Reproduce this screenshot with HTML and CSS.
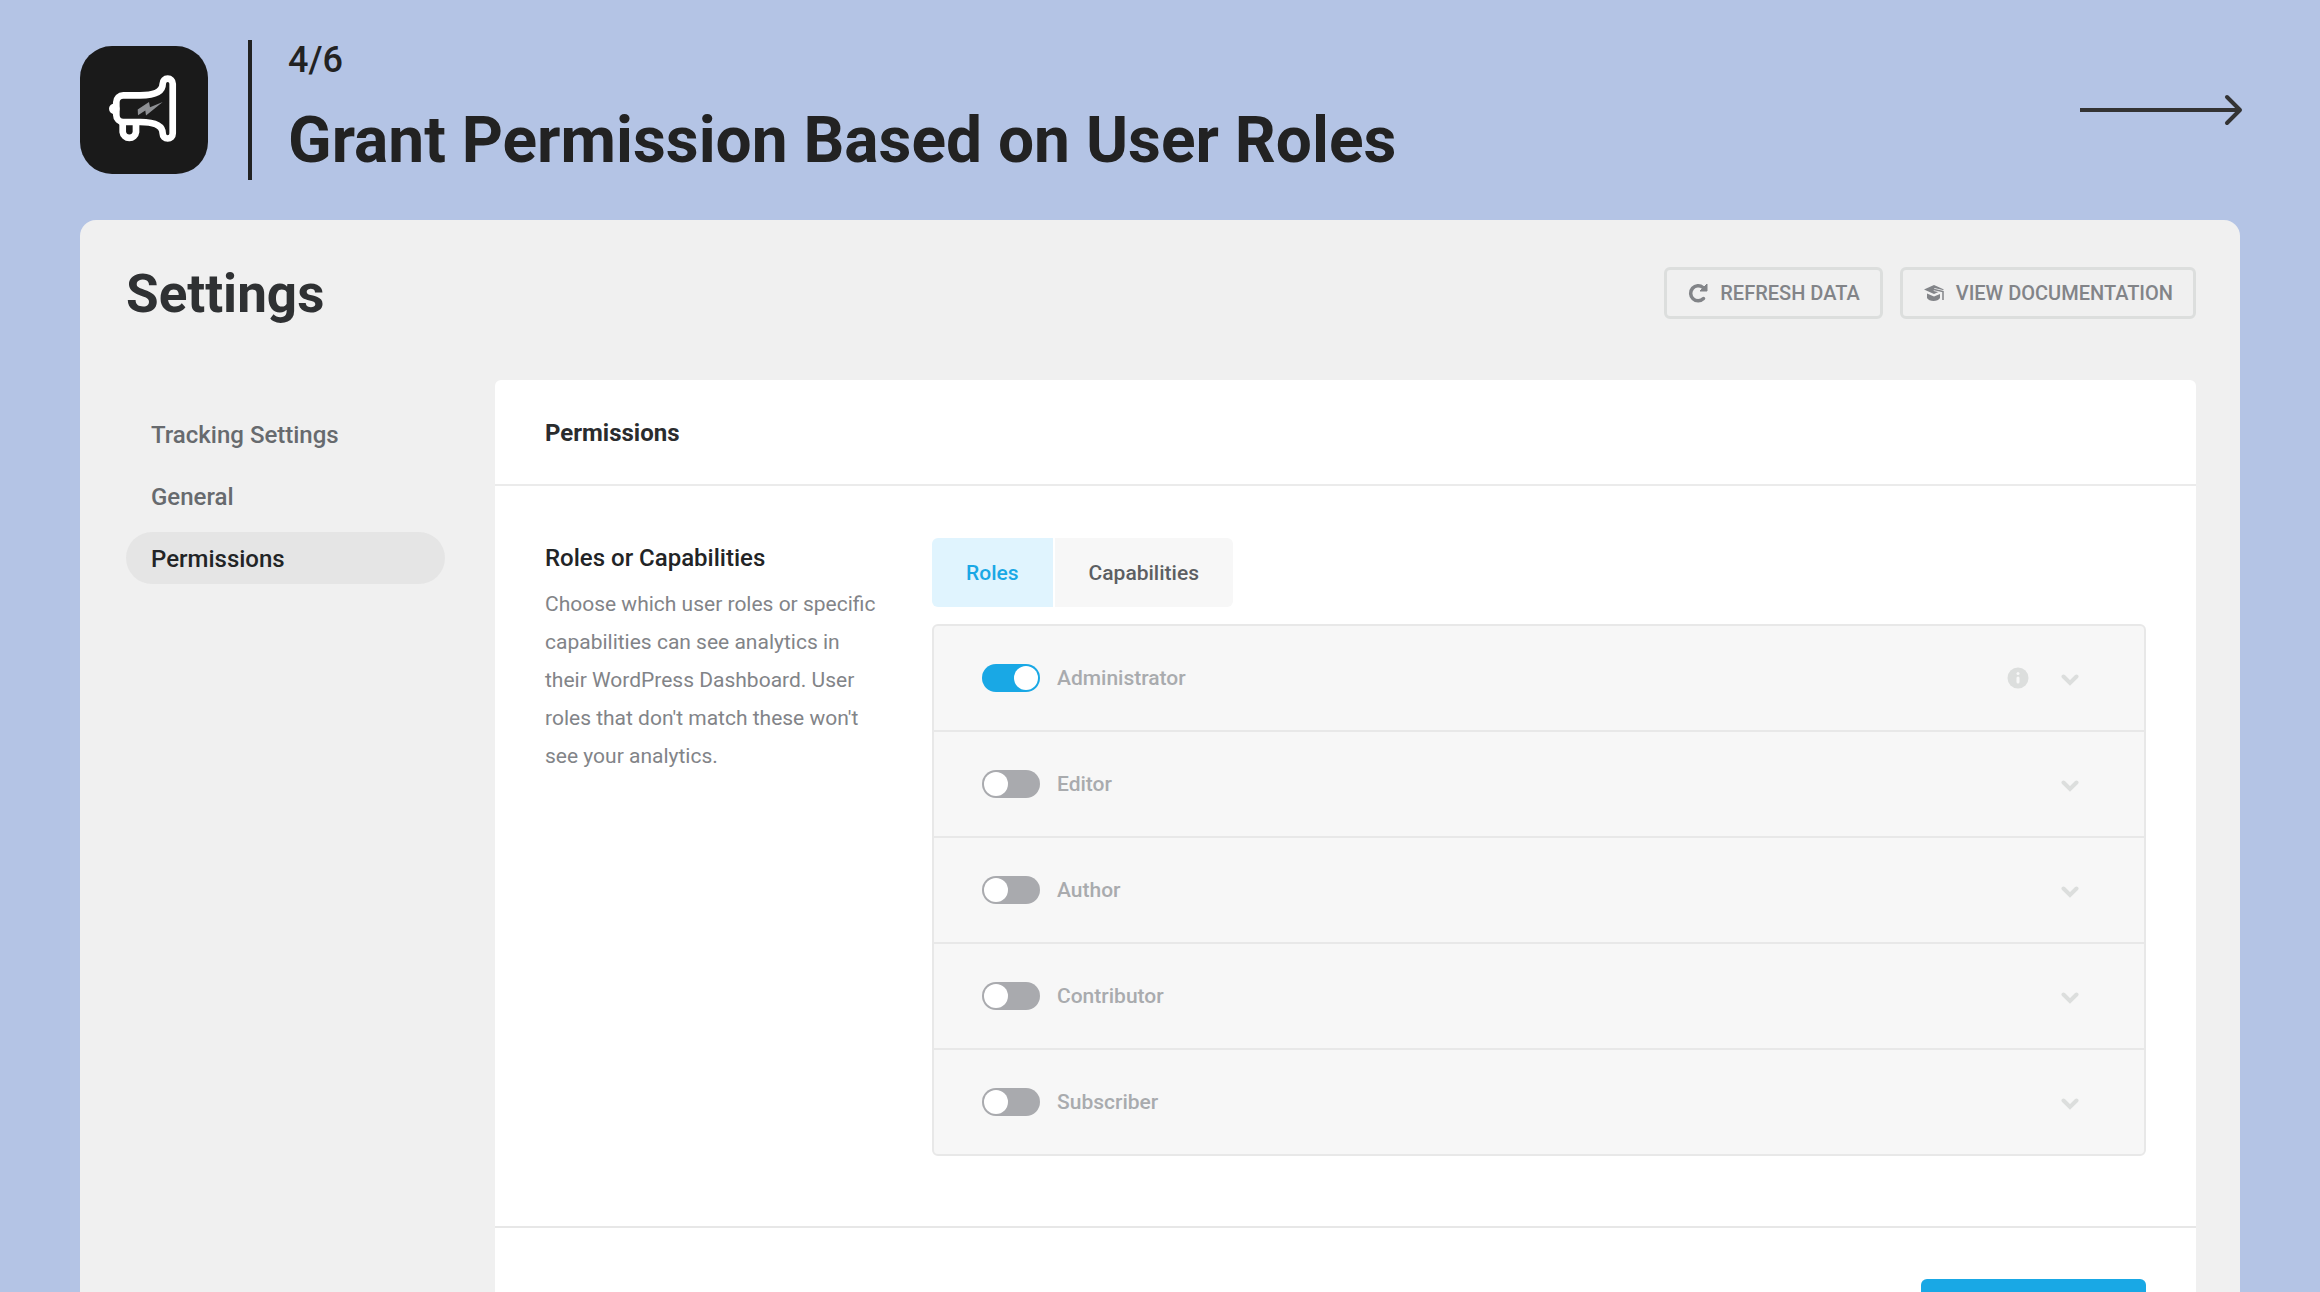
FILE: index.html
```html
<!DOCTYPE html>
<html lang="en">
<head>
  <meta charset="UTF-8" />
  <meta name="viewport" content="width=device-width, initial-scale=1.0" />
  <title>Grant Permission Based on User Roles</title>
  <link rel="stylesheet" href="styles.css">
</head>
<body>

  <div class="page">

    <!-- Slide heading -->
    <header class="slide-header">
      <svg class="logo" viewBox="0 0 128 128" aria-hidden="true">
        <rect width="128" height="128" rx="32" fill="#1a1a1a" />
        <g fill="none" stroke="#fff" stroke-width="6.7">
          <path d="M43.3 49.3H60C74 49.3 82.7 46 82.7 37.7a5 5 0 0 1 10 0V87.5a5 5 0 0 1-10 0C82.7 79 74 76 60 76H43.3a7 7 0 0 1-7-7V56.3a7 7 0 0 1 7-7z" />
          <path d="M42.7 77V86a6.7 6.7 0 0 0 13.3 0V77" />
        </g>
        <circle cx="34.3" cy="62.7" r="5.3" fill="#fff" />
        <path d="M57.7 63.5L69 56l1 5.3L82.7 56 66 69.5l-.7-5-7.3 4.8z" fill="#8e9094" />
      </svg>
      <div class="divider"></div>
      <div class="slide-text">
        <p class="step">4/6</p>
        <h1 class="slide-title">Grant Permission Based on User Roles</h1>
      </div>
      <svg class="arrow" viewBox="0 0 164 32" aria-hidden="true">
        <path d="M0 16H158" stroke="#333" stroke-width="4" />
        <path d="M147 3L160 16L147 29" fill="none" stroke="#333" stroke-width="4" stroke-linecap="round" stroke-linejoin="round" />
      </svg>
    </header>

    <!-- Settings screen -->
    <div class="window">
      <div class="toolbar">
        <h2 class="toolbar-title">Settings</h2>
        <div class="toolbar-actions">
          <button type="button" class="btn-outline">
            <svg width="20" height="22" viewBox="0 0 20 22" aria-hidden="true">
              <path d="M15.5 16.5A7.5 7.5 0 1 1 15 5.500" fill="none" stroke="currentColor" stroke-width="3.5" stroke-linecap="round" />
              <path d="M19 2V9H12z" fill="currentColor" stroke="currentColor" stroke-linejoin="round" />
            </svg>
            REFRESH DATA
          </button>
          <button type="button" class="btn-outline">
            <svg width="20" height="18" viewBox="0 0 20 18" aria-hidden="true">
              <path d="M10 1L20 5.5 10 10 0 5.500z" fill="currentColor" />
              <path d="M3 9.500l7 3L16 10v4c-2 4-11 4-13 0z" fill="currentColor" />
              <path d="M10 5.500l8.800 2V16" fill="none" stroke="#f0f0f0" stroke-width="3" />
              <path d="M10 5.500l9 2V16" fill="none" stroke="currentColor" stroke-width="1.5" />
            </svg>
            VIEW DOCUMENTATION
          </button>
        </div>
      </div>

      <div class="layout">
        <nav class="sidebar">
          <a href="#tracking">Tracking Settings</a>
          <a href="#general">General</a>
          <a href="#permissions" class="active">Permissions</a>
        </nav>

        <main class="card">
          <h3 class="card-header">Permissions</h3>

          <div class="card-body">
            <div class="info">
              <h4 class="info-title">Roles or Capabilities</h4>
              <p class="info-text">Choose which user roles or specific capabilities can see analytics in their WordPress Dashboard. User roles that don't match these won't see your analytics.</p>
            </div>

            <div class="options">
              <div class="tabs">
                <button type="button" class="tab active">Roles</button>
                <button type="button" class="tab">Capabilities</button>
              </div>

              <ul class="roles">
                <li class="role">
                  <input type="checkbox" class="toggle" id="administrator" checked />
                  <label for="administrator">Administrator</label>
                  <svg class="info-icon" viewBox="0 0 22 22" aria-hidden="true">
                    <circle cx="11" cy="11" r="10.5" fill="#dcdedd" />
                    <circle cx="11" cy="6.5" r="1.5" fill="#f7f7f7" />
                    <rect x="9.5" y="9.5" width="3" height="7" rx="1.5" fill="#f7f7f7" />
                  </svg>
                  <button type="button" class="expand" aria-label="Expand Administrator">
                    <svg viewBox="0 0 18 12" aria-hidden="true"><path d="M2.5 2.5L9 9l6.500-6.500" /></svg>
                  </button>
                </li>
                <li class="role">
                  <input type="checkbox" class="toggle" id="editor" />
                  <label for="editor">Editor</label>
                  <button type="button" class="expand" aria-label="Expand Editor">
                    <svg viewBox="0 0 18 12" aria-hidden="true"><path d="M2.5 2.5L9 9l6.500-6.500" /></svg>
                  </button>
                </li>
                <li class="role">
                  <input type="checkbox" class="toggle" id="author" />
                  <label for="author">Author</label>
                  <button type="button" class="expand" aria-label="Expand Author">
                    <svg viewBox="0 0 18 12" aria-hidden="true"><path d="M2.5 2.5L9 9l6.500-6.500" /></svg>
                  </button>
                </li>
                <li class="role">
                  <input type="checkbox" class="toggle" id="contributor" />
                  <label for="contributor">Contributor</label>
                  <button type="button" class="expand" aria-label="Expand Contributor">
                    <svg viewBox="0 0 18 12" aria-hidden="true"><path d="M2.5 2.5L9 9l6.500-6.500" /></svg>
                  </button>
                </li>
                <li class="role">
                  <input type="checkbox" class="toggle" id="subscriber" />
                  <label for="subscriber">Subscriber</label>
                  <button type="button" class="expand" aria-label="Expand Subscriber">
                    <svg viewBox="0 0 18 12" aria-hidden="true"><path d="M2.5 2.5L9 9l6.500-6.500" /></svg>
                  </button>
                </li>
              </ul>
            </div>
          </div>

          <div class="card-footer">
            <button type="button" class="btn-save" aria-label="Save"></button>
          </div>
        </main>
      </div>
    </div>

  </div>

</body>
</html>
```
FILE: styles.css
```css
* {
  box-sizing: border-box;
}

body {
  margin: 0;
  font-family: Roboto, "Liberation Sans", sans-serif;
  background-color: #b4c4e5;
  color: #222;
}

h1, h2, h3, h4, p, ul {
  margin: 0;
  padding: 0;
}

button {
  font-family: inherit;
  border: none;
  cursor: pointer;
}

.page {
  display: flex;
  flex-direction: column;
  height: 100vh;
  padding: 40px 80px 0;
  overflow: hidden;
}

/* Slide heading */
.slide-header {
  display: flex;
  align-items: center;
  margin-bottom: 40px;
}

.logo {
  width: 128px;
  height: 128px;
}

.divider {
  align-self: stretch;
  width: 4px;
  margin: 0 36px 0 40px;
  background: #222;
}

.step {
  margin-bottom: 22px;
  font-size: 36px;
  font-weight: 500;
  line-height: 40px;
}

.slide-title {
  font-size: 64px;
  font-weight: 700;
  line-height: 78px;
}

.arrow {
  width: 164px;
  height: 32px;
  margin: 0 -4px 0 auto;
}

/* Settings screen */
.window {
  flex: 1 0 auto;
  padding: 46px 44px 44px 46px;
  background: #f0f0f0;
  border-radius: 16px 16px 0 0;
}

.toolbar {
  display: flex;
  align-items: center;
  justify-content: space-between;
  margin-bottom: 60px;
}

.toolbar-title {
  padding-top: 2px;
  font-size: 53px;
  font-weight: 700;
  line-height: 52px;
  color: #2f3133;
}

.toolbar-actions {
  display: flex;
  gap: 17px;
}

.btn-outline {
  display: flex;
  align-items: center;
  gap: 12px;
  height: 52px;
  padding: 0 20px 0 21px;
  font-size: 20px;
  font-weight: 500;
  color: #828488;
  background: none;
  border: 3px solid #dcdedd;
  border-radius: 6px;
}

.layout {
  display: flex;
  gap: 50px;
}

.sidebar {
  display: flex;
  flex: 0 0 319px;
  flex-direction: column;
  gap: 10px;
  padding-top: 28px;
}

.sidebar a {
  padding: 2px 25px 0;
  font-size: 24px;
  font-weight: 500;
  line-height: 50px;
  color: #676a6e;
  text-decoration: none;
  border-radius: 26px;
}

.sidebar .active {
  color: #222426;
  background: #e5e5e5;
}

.card {
  flex: 1;
  background: #fff;
  border-radius: 6px;
}

.card-header {
  padding: 2px 50px 0;
  font-size: 24px;
  font-weight: 700;
  line-height: 102px;
  color: #2a2c2e;
  border-bottom: 2px solid #ebebeb;
}

.card-body {
  display: grid;
  grid-template-columns: 337px 1fr;
  gap: 50px;
  padding: 52px 50px 70px;
  border-bottom: 2px solid #e7e7e7;
}

.info {
  padding-top: 1px;
}

.info-title {
  margin-bottom: 8px;
  font-size: 24px;
  font-weight: 500;
  line-height: 38px;
  color: #222426;
}

.info-text {
  font-size: 21px;
  line-height: 38px;
  color: #828488;
}

.tabs {
  display: flex;
  gap: 2px;
  margin-bottom: 17px;
}

.tab {
  height: 69px;
  padding: 0 34px;
  font-size: 21px;
  font-weight: 500;
  color: #5c5f63;
  background: #f7f7f7;
  border-radius: 0 6px 6px 0;
}

.tab.active {
  color: #19a8e5;
  background: #e0f4fe;
  border-radius: 6px 0 0 6px;
}

.roles {
  list-style: none;
  background: #f7f7f7;
  border: 2px solid #e8e8e8;
  border-radius: 6px;
}

.role {
  display: flex;
  align-items: center;
  height: 106px;
  padding: 0 48px;
  border-bottom: 2px solid #e8e8e8;
}

.role:last-child {
  height: 104px;
  border-bottom: none;
}

.role label {
  flex: 1;
  margin-left: 17px;
  font-size: 21px;
  font-weight: 500;
  color: #a9abae;
}

/* On/off switch */
.toggle {
  width: 58px;
  height: 28px;
  margin: 0;
  padding: 2px;
  appearance: none;
  background: #a9aaae;
  border-radius: 14px;
  cursor: pointer;
}

.toggle::before {
  content: "";
  display: block;
  width: 24px;
  height: 24px;
  background: #fff;
  border-radius: 50%;
}

.toggle:checked {
  background: #19a8e5;
}

.toggle:checked::before {
  margin-left: auto;
}

.info-icon {
  width: 22px;
  height: 22px;
  margin-right: 15px;
}

.expand {
  display: flex;
  align-items: center;
  justify-content: center;
  width: 52px;
  height: 52px;
  padding: 3px 0 0;
  background: none;
}

.expand svg {
  width: 18px;
  height: 12px;
  fill: none;
  stroke: #dcdedd;
  stroke-width: 4;
  stroke-linecap: round;
}

.card-footer {
  display: flex;
  justify-content: flex-end;
  padding: 51px 50px;
}

.btn-save {
  width: 225px;
  height: 64px;
  background: #19a8e5;
  border-radius: 6px;
}
```
